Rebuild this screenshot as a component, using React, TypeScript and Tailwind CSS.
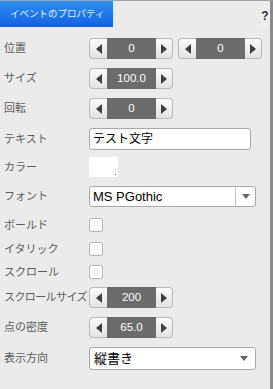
const jp = { fontFamily: '"Liberation Sans", "Noto Sans CJK JP", sans-serif' }

function Tri({ dir }: { dir: 'left' | 'right' }) {
  return (
    <svg width="6" height="10" viewBox="0 0 6 10">
      {dir === 'left' ? <path d="M6 0 L0 5 L6 10 Z" fill="#3f3f3f" /> : <path d="M0 0 L6 5 L0 10 Z" fill="#3f3f3f" />}
    </svg>
  )
}

function Spinner({ value }: { value: string }) {
  return (
    <div className="flex h-full w-[84px]">
      <div className="flex w-[18px] items-center justify-center rounded-l-[4px] border border-r-0 border-[#b9b9b9] bg-gradient-to-b from-[#fbfbfb] to-[#e3e3e3]">
        <Tri dir="left" />
      </div>
      <div className="flex flex-1 items-center justify-center bg-[#6b6b6b] text-[11.5px] text-white" style={jp}>
        {value}
      </div>
      <div className="flex w-[17px] items-center justify-center rounded-r-[4px] border border-l-0 border-[#b9b9b9] bg-gradient-to-b from-[#fbfbfb] to-[#e3e3e3]">
        <Tri dir="right" />
      </div>
    </div>
  )
}

function Caret() {
  return (
    <svg width="8" height="5" viewBox="0 0 8 5">
      <path d="M0 0 L8 0 L4 5 Z" fill="#666" />
    </svg>
  )
}

function Checkbox() {
  return <div className="h-[14px] w-[14px] rounded-[2px] border border-[#b3b3b3] bg-white" />
}

function Row({
  label,
  h,
  mt,
  tight,
  children,
}: {
  label: string
  h: string
  mt: string
  tight?: boolean
  children: React.ReactNode
}) {
  return (
    <div className={`flex items-center ${h} ${mt}`}>
      <div
        className={`w-[89px] shrink-0 pl-[4px] text-[11px] leading-none whitespace-nowrap text-[#5c5c5c] ${tight ? 'tracking-[-0.6px]' : ''}`}
        style={jp}
      >
        {label}
      </div>
      <div className="flex h-full items-center gap-[5px]">{children}</div>
    </div>
  )
}

export default function App() {
  return (
    <div className="flex h-[389px] w-[273px] flex-col border-t border-r-[3px] border-t-[#a3a3a3] border-r-[#8b8b8b] bg-[#ebebeb]">
      <div className="flex h-[26px] items-stretch justify-between">
        <div
          className="flex w-[113px] items-center bg-gradient-to-b from-[#2f8ff2] to-[#1460e2] pl-[10px] text-[9.5px] text-[#e4eeff]"
          style={jp}
        >
          イベントのプロパティ
        </div>
        <div className="mt-[4px] flex w-[10px] items-center justify-center bg-[#eeeeee] text-[12px] font-bold text-[#333]" style={jp}>
          ?
        </div>
      </div>

      <Row label="位置" h="h-[21px]" mt="mt-[11px]">
        <Spinner value="0" />
        <Spinner value="0" />
      </Row>
      <Row label="サイズ" h="h-[21px]" mt="mt-[9px]">
        <Spinner value="100.0" />
      </Row>
      <Row label="回転" h="h-[21px]" mt="mt-[9px]">
        <Spinner value="0" />
      </Row>
      <Row label="テキスト" h="h-[22px]" mt="mt-[9px]">
        <div className="flex h-full w-[162px] items-center rounded-[3px] border border-[#a9a9a9] bg-white pl-[3px] text-[12px] text-black" style={jp}>
          テスト文字
        </div>
      </Row>
      <Row label="カラー" h="h-[20px]" mt="mt-[7px]">
        <div className="relative h-full w-[29px] rounded-[2px] bg-white">
          <div className="absolute right-[2px] bottom-[2px] h-[1px] w-[1px] bg-[#555]" />
        </div>
      </Row>
      <Row label="フォント" h="h-[21px]" mt="mt-[9px]">
        <div className="flex h-full w-[167px] items-stretch rounded-[3px] border border-[#a9a9a9] bg-white">
          <div className="flex flex-1 items-center pl-[3px] text-[13px] text-black" style={jp}>
            MS PGothic
          </div>
          <div className="flex w-[20px] items-center justify-center border-l border-[#c4c4c4]">
            <Caret />
          </div>
        </div>
      </Row>
      <Row label="ボールド" h="h-[14px]" mt="mt-[11px]">
        <Checkbox />
      </Row>
      <Row label="イタリック" h="h-[14px]" mt="mt-[10px]">
        <Checkbox />
      </Row>
      <Row label="スクロール" h="h-[14px]" mt="mt-[9px]">
        <Checkbox />
      </Row>
      <Row label="スクロールサイズ" h="h-[21px]" mt="mt-[8px]" tight>
        <Spinner value="200" />
      </Row>
      <Row label="点の密度" h="h-[21px]" mt="mt-[9px]">
        <Spinner value="65.0" />
      </Row>
      <Row label="表示方向" h="h-[23px]" mt="mt-[9px]">
        <div className="flex h-full w-[167px] items-center justify-between rounded-[3px] border border-[#a9a9a9] bg-white pr-[7px] pl-[4px]">
          <span className="text-[13px] text-black" style={jp}>
            縦書き
          </span>
          <Caret />
        </div>
      </Row>
    </div>
  )
}
